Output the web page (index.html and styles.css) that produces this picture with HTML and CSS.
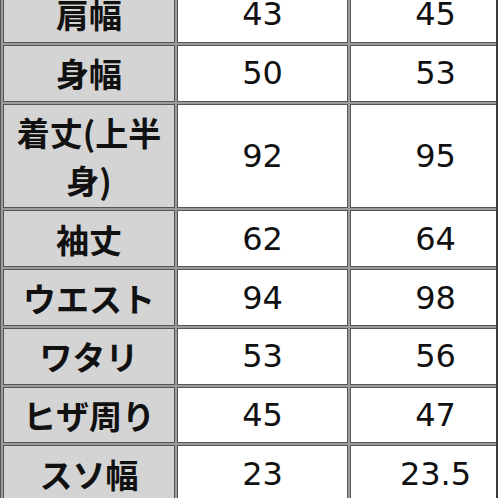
FILE: index.html
```html
<!DOCTYPE html>
<html lang="ja">
<head>
<meta charset="utf-8">
<link rel="stylesheet" href="styles.css">
</head>
<body>
<div class="frame">
<table class="size-table">
  <colgroup>
    <col class="c-label">
    <col class="c-val">
    <col class="c-val">
  </colgroup>
  <tbody>
    <tr><th>肩幅</th><td>43</td><td>45</td></tr>
    <tr><th>身幅</th><td>50</td><td>53</td></tr>
    <tr><th>着丈(上半身)</th><td>92</td><td>95</td></tr>
    <tr><th>袖丈</th><td>62</td><td>64</td></tr>
    <tr><th>ウエスト</th><td>94</td><td>98</td></tr>
    <tr><th>ワタリ</th><td>53</td><td>56</td></tr>
    <tr><th>ヒザ周り</th><td>45</td><td>47</td></tr>
    <tr><th>スソ幅</th><td>23</td><td>23.5</td></tr>
  </tbody>
</table>
</div>
</body>
</html>
```
FILE: styles.css
```css
html, body {
  margin: 0;
  padding: 0;
  background: #ffffff;
}
body {
  width: 498px;
  height: 498px;
  overflow: hidden;
}
.frame {
  width: 496px;
  height: 498px;
  overflow: hidden;
  border-right: 2px solid #3a3a3a;
}
.size-table {
  margin-top: -17px;
  table-layout: fixed;
  width: 520px;
  border: 1px solid #555;
  border-spacing: 2px;
  background: #9c9c9c;
}
.c-label { width: 172px; }
.c-val { width: 171px; }
.size-table th,
.size-table td {
  border: 1px solid #555;
  padding: 3.4px 4px;
  line-height: 48px;
  text-align: center;
  color: #111;
  box-sizing: border-box;
}
.size-table th {
  background: #d4d4d4;
  font-family: "Noto Sans CJK JP", "Noto Sans", sans-serif;
  font-weight: 700;
  font-size: 33px;
}
.size-table td {
  background: #ffffff;
  font-family: "DejaVu Sans", sans-serif;
  font-weight: 400;
  font-size: 32px;
}
```
